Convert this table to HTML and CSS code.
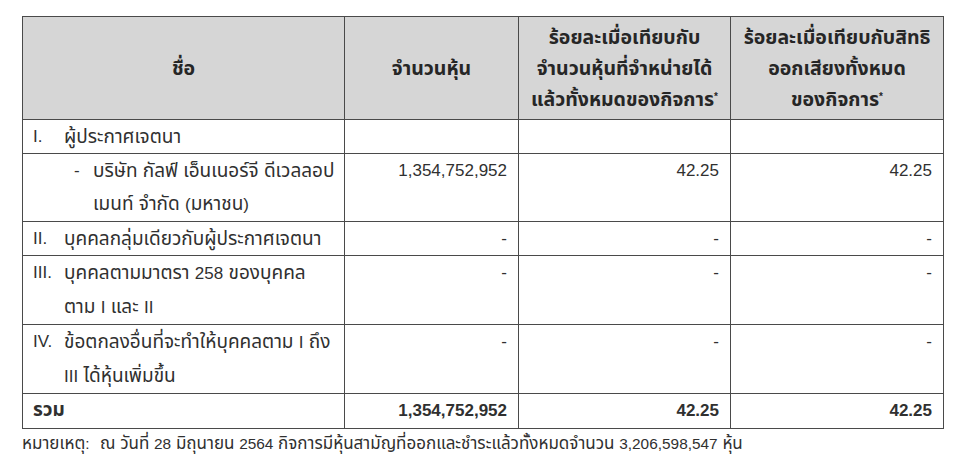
FILE: index.html
```html
<!DOCTYPE html>
<html lang="th">
<head>
<meta charset="utf-8">
<title>ผู้ประกาศเจตนา</title>
<link rel="stylesheet" href="styles.css">
</head>
<body>
<main class="page">
  <table class="holdings">
    <colgroup>
      <col class="c-name">
      <col class="c-shares">
      <col class="c-pct1">
      <col class="c-pct2">
    </colgroup>
    <thead>
      <tr>
        <th>ชื่อ</th>
        <th>จำนวนหุ้น</th>
        <th>ร้อยละเมื่อเทียบกับ<br>จำนวนหุ้นที่จำหน่ายได้<br>แล้วทั้งหมดของกิจการ<sup>*</sup></th>
        <th>ร้อยละเมื่อเทียบกับสิทธิ<br>ออกเสียงทั้งหมด<br>ของกิจการ<sup>*</sup></th>
      </tr>
    </thead>
    <tbody>
      <tr class="dotted">
        <td class="name"><span class="num">I.</span><span class="label">ผู้ประกาศเจตนา</span></td>
        <td class="val"></td>
        <td class="val"></td>
        <td class="val"></td>
      </tr>
      <tr>
        <td class="name sub"><span class="dash">-</span><span class="label">บริษัท กัลฟ์ เอ็นเนอร์จี ดีเวลลอป<br>เมนท์ จำกัด <span class="lat">(</span>มหาชน<span class="lat">)</span></span></td>
        <td class="val">1,354,752,952</td>
        <td class="val">42.25</td>
        <td class="val">42.25</td>
      </tr>
      <tr>
        <td class="name"><span class="num">II.</span><span class="label">บุคคลกลุ่มเดียวกับผู้ประกาศเจตนา</span></td>
        <td class="val">-</td>
        <td class="val">-</td>
        <td class="val">-</td>
      </tr>
      <tr>
        <td class="name"><span class="num">III.</span><span class="label">บุคคลตามมาตรา <span class="lat">258</span> ของบุคคล<br>ตาม <span class="lat">I</span> และ <span class="lat">II</span></span></td>
        <td class="val">-</td>
        <td class="val">-</td>
        <td class="val">-</td>
      </tr>
      <tr>
        <td class="name"><span class="num">IV.</span><span class="label">ข้อตกลงอื่นที่จะทำให้บุคคลตาม <span class="lat">I</span> ถึง<br><span class="lat">III</span> ได้หุ้นเพิ่มขึ้น</span></td>
        <td class="val">-</td>
        <td class="val">-</td>
        <td class="val">-</td>
      </tr>
      <tr class="total">
        <td class="name">รวม</td>
        <td class="val">1,354,752,952</td>
        <td class="val">42.25</td>
        <td class="val">42.25</td>
      </tr>
    </tbody>
  </table>
  <p class="note"><span class="note-label">หมายเหตุ<span class="lat">:</span></span><span>ณ วันที่ <span class="lat">28</span> มิถุนายน <span class="lat">2564</span> กิจการมีหุ้นสามัญที่ออกและชำระแล้วทั้งหมดจำนวน <span class="lat">3,206,598,547</span> หุ้น</span></p>
</main>
</body>
</html>
```

FILE: styles.css
```css
* { box-sizing: border-box; }
html, body { margin: 0; background: #ffffff; }
body {
  font-family: "Liberation Sans", "Noto Sans Thai", "Noto Sans", sans-serif;
  color: #303030;
  font-size: 19px;
}
.lat {
  font-size: 17px;
}
.page {
  padding: 16px 0 0 22px;
}
.holdings {
  border-collapse: collapse;
  width: 921px;
  table-layout: fixed;
}
.c-name { width: 322px; }
.c-shares { width: 174px; }
.c-pct1 { width: 212px; }
.c-pct2 { width: 213px; }

.holdings th,
.holdings td {
  border: 1px solid #4a4a4a;
  padding: 0;
}
.holdings th {
  background: #d6d6d6;
  height: 103px;
  font-size: 19.5px;
  font-weight: bold;
  line-height: 31px;
  text-align: center;
  vertical-align: middle;
  color: #262626;
}
.holdings th sup {
  font-size: 10px;
  vertical-align: 6px;
  line-height: 0;
}
.holdings td {
  line-height: 33px;
  vertical-align: top;
}
.holdings tr.dotted td {
  border-bottom: 1px dotted #8a8a8a;
}
.name {
  padding-left: 10px !important;
  white-space: nowrap;
}
.name .num {
  display: inline-block;
  width: 31px;
  vertical-align: top;
  font-size: 17px;
}
.name .label {
  display: inline-block;
  vertical-align: top;
}
.name.sub {
  padding-left: 51px !important;
}
.name.sub .dash {
  display: inline-block;
  width: 19px;
  vertical-align: top;
  font-size: 17px;
}
.val {
  text-align: right;
  padding-right: 11px !important;
  font-size: 17px;
}
.total td {
  font-weight: bold;
  line-height: 34px;
}
.total .name {
  line-height: 31px;
  padding-bottom: 3px !important;
}
.note {
  margin: 3px 0 0;
  line-height: 24px;
  display: flex;
  font-size: 17px;
}
.note .lat {
  font-size: 15.4px;
}
.note-label {
  flex: none;
  width: 78px;
}
```
